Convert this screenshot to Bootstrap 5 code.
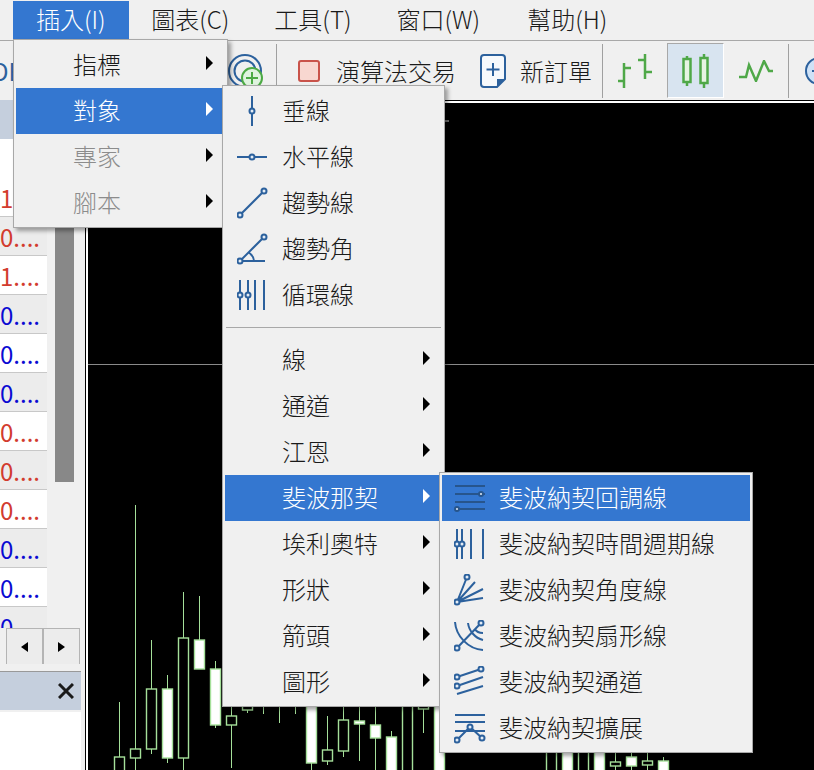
<!DOCTYPE html>
<html lang="zh-Hant">
<head>
    <meta charset="UTF-8">
    <meta name="viewport" content="width=device-width, initial-scale=1.0">
    <title>插入選單</title>
    <link href="https://cdn.jsdelivr.net/npm/bootstrap@5.3.0/dist/css/bootstrap.min.css" rel="stylesheet">
    <style>
        html, body {
            height: 100%;
            overflow: hidden;
        }
        body {
            background-color: #f0f0f0;
            font-family: "Noto Sans CJK TC", "Open Sans", sans-serif;
            font-size: 24px;
            font-weight: 300;
            color: #1a1a1a;
        }
        .app-frame {
            width: 814px;
            height: 770px;
            position: relative;
            overflow: hidden;
        }
        .menu-bar {
            height: 41px;
            padding-left: 13px;
            border-bottom: 1px solid #a8a8a8;
        }
        .menu-top {
            height: 38px;
            margin-top: 1px;
            padding: 0 22.5px;
            line-height: 36px;
            white-space: nowrap;
        }
        .menu-top.is-open {
            padding: 0 23px;
            background-color: #3477d0;
            color: #fff;
        }
        .menu-top.is-last {
            margin-left: 2px;
        }
        .tool-bar {
            height: 59px;
            padding-top: 3px;
        }
        .tool-sep {
            width: 1px;
            height: 54px;
            flex-shrink: 0;
            background-color: #a0a0a0;
        }
        .tool-btn {
            height: 54px;
            white-space: nowrap;
            line-height: 1;
            flex-shrink: 0;
        }
        .tool-clip {
            width: 228px;
            color: #2c619d;
            font-weight: 400;
        }
        .tool-clip span {
            margin-left: -8px;
        }
        .tool-rings {
            width: 48px;
        }
        .tool-algo {
            width: 181px;
            padding-left: 21px;
            gap: 16px;
        }
        .tool-order {
            width: 144px;
            padding-left: 22px;
            gap: 14px;
        }
        .tool-chart {
            width: 64px;
        }
        .tool-active {
            width: 57px;
            height: 55px;
            margin-top: -1px;
            background-color: #d8e4f0;
            border: 1px solid #fff;
            border-left-color: #a8a8a8;
            border-top-color: #a8a8a8;
        }
        .tool-zoom {
            padding-left: 16px;
        }
        .work-area {
            height: 670px;
        }
        .side-panel {
            width: 85px;
            flex-shrink: 0;
            position: relative;
        }
        .white-rule {
            height: 3px;
            background-color: #fff;
            border-top: 1px solid #000;
        }
        .quote-head {
            height: 39px;
            width: 47px;
            background-color: #c5cfdd;
        }
        .quote-row {
            height: 39px;
            width: 47px;
            background-color: #fff;
            border-bottom: 1px solid #c8c8c8;
            font-weight: 400;
            line-height: 40px;
            overflow: hidden;
        }
        .quote-row.is-blank {
            border-bottom: 0;
        }
        .quote-row.is-alt {
            background-color: #ececec;
        }
        .quote-up {
            color: #d23b2e;
        }
        .quote-down {
            color: #0a0ad2;
        }
        .side-scroll {
            position: absolute;
            left: 55px;
            top: 0;
            width: 19px;
            height: 382px;
            background-color: #888;
        }
        .side-list {
            height: 528px;
            overflow: hidden;
        }
        .h-scroll {
            height: 36px;
            padding-left: 6px;
        }
        .h-scroll-btn {
            width: 37px;
            height: 36px;
            border: 1px solid #b4b4b4;
            border-bottom: 0;
            background-color: #ececec;
        }
        .dock-head {
            width: 81px;
            height: 39px;
            margin-top: 7px;
            background-color: #c5cfdd;
            border-top: 1px solid #999;
            padding-right: 7px;
        }
        .dock-body {
            width: 81px;
            height: 60px;
            margin-top: 2px;
            background-color: #fff;
        }
        .chart-edge {
            width: 3px;
            flex-shrink: 0;
            background-color: #fff;
            border-left: 1px solid #000;
        }
        .chart-col {
            flex: 1;
            height: 100%;
        }
        .chart-box {
            background-color: #000;
            height: 667px;
        }
        .drop-panel {
            position: absolute;
            background-color: #f0f0f0;
            border: 1px solid #a8a8a8;
            box-shadow: 3px 3px 4px rgba(0, 0, 0, .35);
            padding: 2px 2px 1px 2px;
        }
        .drop-one {
            left: 13px;
            top: 39px;
            width: 215px;
            z-index: 5;
        }
        .drop-two {
            left: 222px;
            top: 85px;
            width: 223px;
            z-index: 6;
        }
        .drop-three {
            left: 439px;
            top: 472px;
            width: 314px;
            z-index: 7;
        }
        .drop-item {
            height: 46px;
            position: relative;
            white-space: nowrap;
            line-height: 44px;
            padding-left: 57px;
        }
        .drop-item.is-hot {
            background-color: #3477d0;
            color: #fff;
        }
        .drop-item.is-off {
            color: #8c8c8c;
        }
        .drop-item::after {
            content: "";
            position: absolute;
            right: 12px;
            top: 14px;
            border-left: 7px solid #000;
            border-top: 7px solid transparent;
            border-bottom: 7px solid transparent;
        }
        .drop-item.is-hot::after {
            border-left-color: #fff;
        }
        .drop-item.no-arrow::after {
            display: none;
        }
        .drop-icon {
            position: absolute;
            left: 12px;
            top: 7px;
            width: 32px;
            height: 32px;
            fill: none;
            stroke: #2c619d;
            stroke-width: 2;
        }
        .drop-icon circle {
            fill: #e4ecf5;
        }
        .is-hot .drop-icon {
            stroke: #27558c;
        }
        .drop-rule {
            height: 1px;
            margin: 9px 1px;
            background-color: #a8a8a8;
        }
    </style>
</head>
<body>
<div class="app-frame">
    <div class="menu-bar d-flex">
        <div class="menu-top is-open">插入(I)</div>
        <div class="menu-top">圖表(C)</div>
        <div class="menu-top">工具(T)</div>
        <div class="menu-top">窗口(W)</div>
        <div class="menu-top is-last">幫助(H)</div>
    </div>

    <div class="tool-bar d-flex align-items-start">
        <div class="tool-btn tool-clip d-flex align-items-center"><span>DE</span></div>
        <div class="tool-btn tool-rings d-flex align-items-center">
            <svg width="38" height="38" viewBox="0 0 38 38" fill="none">
                <circle cx="17" cy="19" r="16" stroke="#2c619d" stroke-width="2"/>
                <circle cx="17" cy="19" r="10.500" stroke="#2c619d" stroke-width="2"/>
                <circle cx="24" cy="26" r="10" fill="#dff3df" stroke="#4caa44" stroke-width="2"/>
                <path d="M24 20v12M18 26h12" stroke="#4caa44" stroke-width="2"/>
            </svg>
        </div>
        <div class="tool-sep"></div>
        <div class="tool-btn tool-algo d-flex align-items-center">
            <svg width="22" height="22" viewBox="0 0 22 22"><rect x="1" y="1" width="20" height="20" rx="2" fill="#f8d7d0" stroke="#c9534a" stroke-width="2"/></svg>
            <span>演算法交易</span>
        </div>
        <div class="tool-btn tool-order d-flex align-items-center">
            <svg width="26" height="34" viewBox="0 0 26 34" fill="none">
                <path d="M4 1h18a3 3 0 0 1 3 3v21l-8 8H4a3 3 0 0 1-3-3V4a3 3 0 0 1 3-3z" stroke="#2c619d" stroke-width="2" fill="#f6f9fc"/>
                <path d="M17 33l8-8h-8z" fill="#2c619d"/>
                <path d="M13 9v13M6.500 15.500h13" stroke="#2c619d" stroke-width="2"/>
            </svg>
            <span>新訂單</span>
        </div>
        <div class="tool-sep"></div>
        <div class="tool-btn tool-chart d-flex align-items-center justify-content-center">
            <svg width="34" height="34" viewBox="0 0 34 34" fill="none" stroke="#4fa848" stroke-width="2.500">
                <path d="M6 9v25M0 27h6M6 14h7M27 0v25M20 6h7M27 18h7"/>
            </svg>
        </div>
        <div class="tool-btn tool-active d-flex align-items-center justify-content-center">
            <svg width="28" height="34" viewBox="0 0 28 34" fill="none" stroke="#4fa848" stroke-width="2.500">
                <path d="M5 2v4M5 28v4M22 0v4M22 29v5"/>
                <rect x="1.500" y="5" width="7" height="23" fill="#e6f5e2"/>
                <rect x="18.500" y="4" width="7" height="25" fill="#e6f5e2"/>
            </svg>
        </div>
        <div class="tool-btn tool-chart d-flex align-items-center justify-content-center">
            <svg width="34" height="22" viewBox="0 0 34 22" fill="none" stroke="#4fa848" stroke-width="2.500">
                <path d="M0 17h7l3-12 7 16 8-20 5 10h4"/>
            </svg>
        </div>
        <div class="tool-sep"></div>
        <div class="tool-btn tool-zoom d-flex align-items-center">
            <svg width="28" height="28" viewBox="0 0 28 28" fill="#cfe2f7" stroke="#2c619d" stroke-width="2"><circle cx="14" cy="14" r="13"/><path d="M7 14h14"/></svg>
        </div>
    </div>

    <div class="work-area d-flex">
        <div class="side-panel">
            <div class="side-list">
                <div class="quote-head"></div>
                <div class="quote-row is-blank"></div>
                <div class="quote-row quote-up">1....</div>
                <div class="quote-row is-alt quote-up">0....</div>
                <div class="quote-row quote-up">1....</div>
                <div class="quote-row is-alt quote-down">0....</div>
                <div class="quote-row quote-down">0....</div>
                <div class="quote-row is-alt quote-down">0....</div>
                <div class="quote-row quote-up">0....</div>
                <div class="quote-row is-alt quote-up">0....</div>
                <div class="quote-row quote-up">0....</div>
                <div class="quote-row is-alt quote-down">0....</div>
                <div class="quote-row quote-down">0....</div>
                <div class="quote-row is-alt quote-down">0....</div>
            </div>
            <div class="side-scroll"></div>
            <div class="h-scroll d-flex">
                <div class="h-scroll-btn d-flex align-items-center justify-content-center">
                    <svg width="7" height="10" viewBox="0 0 7 10"><path d="M7 0v10L0 5z" fill="#000"/></svg>
                </div>
                <div class="h-scroll-btn d-flex align-items-center justify-content-center">
                    <svg width="7" height="10" viewBox="0 0 7 10"><path d="M0 0v10l7-5z" fill="#000"/></svg>
                </div>
            </div>
            <div class="dock-head d-flex align-items-center justify-content-end">
                <svg width="16" height="16" viewBox="0 0 16 16" stroke="#1a1a1a" stroke-width="3"><path d="M1 1l14 14M15 1L1 15"/></svg>
            </div>
            <div class="dock-body"></div>
        </div>
        <div class="chart-edge"></div>
        <div class="chart-col">
            <div class="white-rule"></div>
            <div class="chart-box">
                <svg id="chart" class="d-block" width="726" height="667" viewBox="88 103 726 667"></svg>
            </div>
        </div>
    </div>

    <div class="drop-panel drop-one">
        <div class="drop-item">指標</div>
        <div class="drop-item is-hot">對象</div>
        <div class="drop-item is-off">專家</div>
        <div class="drop-item is-off">腳本</div>
    </div>

    <div class="drop-panel drop-two">
        <div class="drop-item no-arrow">
            <svg class="drop-icon" viewBox="0 0 32 32"><path d="M15 1v30"/><circle cx="15" cy="16" r="2.500"/></svg>垂線
        </div>
        <div class="drop-item no-arrow">
            <svg class="drop-icon" viewBox="0 0 32 32"><path d="M0 16h30"/><circle cx="15" cy="16" r="2.500"/></svg>水平線
        </div>
        <div class="drop-item no-arrow">
            <svg class="drop-icon" viewBox="0 0 32 32"><path d="M3 28L27 4"/><circle cx="3" cy="28" r="2.500"/><circle cx="27" cy="4" r="2.500"/></svg>趨勢線
        </div>
        <div class="drop-item no-arrow">
            <svg class="drop-icon" viewBox="0 0 32 32"><path d="M3 28L27 4M3 28h25M11 19c3 2 6 5 6 9"/><circle cx="3" cy="28" r="2.500"/><circle cx="27" cy="4" r="2.500"/></svg>趨勢角
        </div>
        <div class="drop-item no-arrow">
            <svg class="drop-icon" viewBox="0 0 32 32"><path d="M3 1v30M11 1v30M18 1v30M27 1v30"/><circle cx="3" cy="16" r="2.500"/><circle cx="11" cy="16" r="2.500"/></svg>循環線
        </div>
        <div class="drop-rule"></div>
        <div class="drop-item">線</div>
        <div class="drop-item">通道</div>
        <div class="drop-item">江恩</div>
        <div class="drop-item is-hot">斐波那契</div>
        <div class="drop-item">埃利奧特</div>
        <div class="drop-item">形狀</div>
        <div class="drop-item">箭頭</div>
        <div class="drop-item">圖形</div>
    </div>

    <div class="drop-panel drop-three">
        <div class="drop-item no-arrow is-hot">
            <svg class="drop-icon" viewBox="0 0 32 32"><path d="M1 4h30M1 12h30M1 20h30M3 27h28"/><circle cx="27" cy="12" r="2"/><circle cx="3" cy="27" r="2"/></svg>斐波納契回調線
        </div>
        <div class="drop-item no-arrow">
            <svg class="drop-icon" viewBox="0 0 32 32"><path d="M3 1v30M8 1v30M17 1v30M29 1v30"/><circle cx="3" cy="16" r="2.500"/><circle cx="8" cy="16" r="2.500"/></svg>斐波納契時間週期線
        </div>
        <div class="drop-item no-arrow">
            <svg class="drop-icon" viewBox="0 0 32 32"><path d="M3 28L13 3M3 28L21 8M3 28L29 15M3 28L29 24"/><circle cx="3" cy="28" r="2.500"/><circle cx="13" cy="3" r="2.500"/></svg>斐波納契角度線
        </div>
        <div class="drop-item no-arrow">
            <svg class="drop-icon" viewBox="0 0 32 32"><path d="M3 28L27 3M1 2C2 16 14 29 29 30M14 3C15 11 21 18 29 20M21 9C22 11 25 13 29 13"/><circle cx="3" cy="28" r="2.500"/><circle cx="27" cy="3" r="2.500"/></svg>斐波納契扇形線
        </div>
        <div class="drop-item no-arrow">
            <svg class="drop-icon" viewBox="0 0 32 32"><path d="M3 11L27 3M3 20L29 11M3 28L29 20"/><circle cx="3" cy="11" r="2.500"/><circle cx="3" cy="20" r="2.500"/><circle cx="27" cy="3" r="2.500"/></svg>斐波納契通道
        </div>
        <div class="drop-item no-arrow">
            <svg class="drop-icon" viewBox="0 0 32 32"><path d="M1 3h30M1 10h30M1 19h30M3 28L16 15L28 26"/><circle cx="3" cy="28" r="2.500"/><circle cx="16" cy="15" r="2.500"/><circle cx="28" cy="26" r="2.500"/></svg>斐波納契擴展
        </div>
    </div>
</div>

<script src="https://cdn.jsdelivr.net/npm/bootstrap@5.3.0/dist/js/bootstrap.bundle.min.js"></script>
<script>
    // x, wick top, wick bottom, body top, body bottom, filled (no body top = wick only)
    const candles = [
        [119, 702, 790, 757, 790, 0],
        [135, 505, 790, 749, 758, 0],
        [151, 640, 754, 689, 749, 0],
        [167, 675, 763, 689, 758, 1],
        [183, 592, 790, 638, 758, 0],
        [199, 596, 669, 640, 669, 1],
        [215, 661, 728, 669, 725, 1],
        [231, 690, 768, 716, 725, 0],
        [247, 690, 713, 690, 710, 0],
        [263, 690, 714],
        [279, 690, 723],
        [295, 690, 714],
        [311, 690, 770, 690, 763, 1],
        [327, 716, 765, 750, 761, 0],
        [343, 690, 757, 720, 751, 0],
        [359, 690, 761, 721, 724, 1],
        [375, 690, 790, 725, 738, 1],
        [391, 731, 790, 737, 790, 1],
        [407, 690, 790, 690, 790, 0],
        [423, 690, 733, 690, 709, 0],
        [439, 690, 790, 690, 790, 1],
        [551, 740, 790, 740, 790, 0],
        [567, 740, 790, 740, 790, 1],
        [583, 740, 790, 740, 790, 0],
        [599, 740, 790, 740, 790, 1],
        [615, 740, 770, 762, 766, 0],
        [631, 740, 770, 757, 766, 1],
        [647, 740, 770, 761, 765, 0],
        [663, 757, 790, 761, 790, 1]
    ];
    const svgNs = 'http://www.w3.org/2000/svg';
    const chart = document.getElementById('chart');

    function addShape(tag, attrs) {
        const el = document.createElementNS(svgNs, tag);
        Object.keys(attrs).forEach(k => el.setAttribute(k, attrs[k]));
        chart.appendChild(el);
    }

    addShape('line', { x1: 88, y1: 364.5, x2: 814, y2: 364.5, stroke: '#8a8a8a' });
    addShape('line', { x1: 445, y1: 121, x2: 449, y2: 121, stroke: '#ddd' });
    candles.forEach(c => {
        addShape('line', { x1: c[0] + 0.5, y1: c[1], x2: c[0] + 0.5, y2: c[2], stroke: '#a5e09a' });
        if (c.length > 3) {
            addShape('rect', {
                x: c[0] - 4.5, y: c[3], width: 10, height: c[4] - c[3],
                fill: c[5] ? '#fff' : '#000', stroke: '#a5e09a', 'stroke-width': 1.4
            });
        }
    });
</script>
</body>
</html>
